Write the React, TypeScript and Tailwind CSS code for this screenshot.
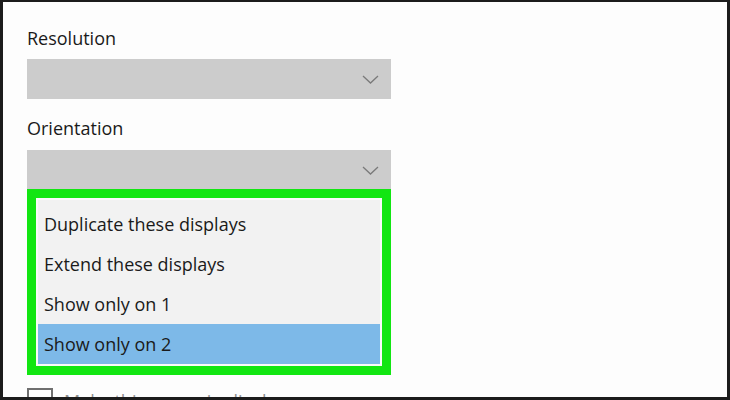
const options = [
  'Duplicate these displays',
  'Extend these displays',
  'Show only on 1',
  'Show only on 2',
]

function Chevron() {
  return (
    <svg width="17" height="9" viewBox="0 0 17 9" className="text-[#7a7a7a]">
      <path d="M1 1 L8.5 8 L16 1" fill="none" stroke="currentColor" strokeWidth="1.3" />
    </svg>
  )
}

function Select() {
  return (
    <div className="w-[364px] h-10 bg-[#cccccc] flex items-center justify-end pr-3">
      <Chevron />
    </div>
  )
}

export default function App() {
  const selected = 3

  return (
    <div className="w-[730px] h-[400px] overflow-hidden bg-[#fdfdfd] border-[#1c1c1c] border-t-2 border-l-[3px] border-r-[3px] border-b-[3px] font-['Open_Sans',sans-serif] text-[18px] text-[#1a1a1a]">
      <div className="pl-6 pt-6 flex flex-col">
        <div className="leading-6">Resolution</div>
        <div className="mt-[9px]">
          <Select />
        </div>
        <div className="leading-6 mt-[17px]">Orientation</div>
        <div className="mt-[10px]">
          <Select />
        </div>

        <div className="-mt-px w-[364px] border-[9px] border-[#12e612]">
          <div className="border-2 border-[#fafafa] bg-[#f2f2f2] pt-1">
            {options.map((opt, i) => (
              <div
                key={opt}
                className={`h-10 flex items-center pl-[6px] leading-6 ${i === selected ? 'bg-[#7db9e8]' : ''}`}
              >
                {opt}
              </div>
            ))}
          </div>
        </div>

        <div className="mt-[13px] flex items-center gap-[11px]">
          <div className="w-[26px] h-[26px] border-2 border-[#6f6f6f]" />
          <span className="text-[#8f8f8f] leading-6">Make this my main display</span>
        </div>
      </div>
    </div>
  )
}
